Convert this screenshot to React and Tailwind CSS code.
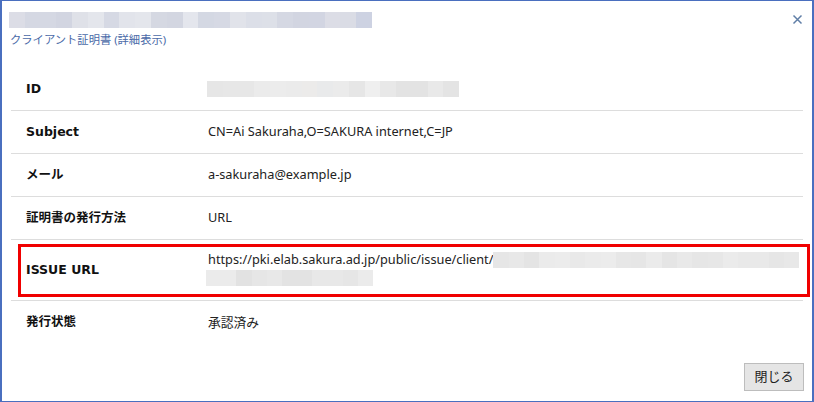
import React from "react";

const titleColors = ["#dcdde6","#d5d8e3","#d5d8e3","#d2d5e1","#dfe1e8","#e4e6ec","#d6d9e4","#e2e4eb","#e4e6ec","#d5d8e2","#d3d6e1","#e4e6ed","#d4d8e3","#d6d9e4","#e1e3ea","#dcdfe8","#dde0e8","#d5d8e3","#d2d5e1","#d2d5e2","#dcdde6","#dadce5","#cdd2e2"];
const idColors = ["#e6e6e6","#e7e7e7","#e7e7e7","#ebebeb","#ececec","#ebebeb","#ecebea","#e9eaeb","#ebebeb","#e6e6e6","#efefef","#e8e8e8","#e3e3e3","#e3e3e3","#e9e9e9","#e4e4e4"];
const url1Colors = ["#e6e6e6","#e8e8e8","#e4e4e4","#ebebeb","#ececec","#e9e9e9","#ebebeb","#ececec","#e7e7e7","#e6e6e6","#ebebeb","#e5e5e5","#e9e9e9","#e6e6e6","#e7e7e7","#ebebeb","#e9e9e9","#e9e9e9","#e6e6e6","#e8e8e8"];
const url2Colors = ["#ebebeb","#ebebeb","#e2e2e2","#e6e6e6","#e8e8e8","#e3e3e3","#e3e3e3","#e8e8e8","#e8e8e8","#e6e6e6","#ebebeb"];

const labelFont = { fontFamily: '"DejaVu Sans", "Noto Sans CJK JP", sans-serif' };

function Blur({ colors, w, h = 16, className = "" }) {
  const bw = w / colors.length;
  return (
    <div className={"flex shrink-0 " + className} style={{ width: w, height: h }}>
      {colors.map((c, i) => (
        <div key={i} style={{ width: bw, height: h, background: c }} />
      ))}
    </div>
  );
}

function Row({ label, children, last }) {
  return (
    <div className={"flex items-center h-[43px] " + (last ? "" : "border-b border-[#dddddd]")}>
      <div className="w-[197px] pl-[15px] font-bold text-[12.5px] text-[#111]" style={labelFont}>{label}</div>
      <div className="flex-1 text-[12.75px] text-[#222]">{children}</div>
    </div>
  );
}

export default function App() {
  return (
    <div
      className="w-[814px] h-[402px] bg-white border-l-2 border-r-2 border-t border-b border-[#4a6fbf] relative overflow-hidden"
      style={{ fontFamily: '"Noto Sans", "Noto Sans CJK JP", sans-serif' }}
    >
      <div className="pl-[7px] pt-[11px]">
        <Blur colors={titleColors} w={363} h={16} />
        <div className="mt-[4px] pl-[1px] text-[11.3px] leading-[16px] text-[#4a6aa8]">
          クライアント証明書 (詳細表示)
        </div>
      </div>
      <button className="absolute left-[788px] top-[11px] w-[14px] h-[14px] flex items-center justify-center">
        <svg width="11" height="11" viewBox="0 0 11 11">
          <path d="M1.5 1.5 L9.5 9.5 M9.5 1.5 L1.5 9.5" stroke="#5f7ea6" strokeWidth="1.5" />
        </svg>
      </button>

      <div className="ml-[9px] mr-[9px] mt-[20px]">
        <Row label="ID">
          <Blur colors={idColors} w={252} h={16} className="-ml-[1px]" />
        </Row>
        <Row label="Subject">CN=Ai Sakuraha,O=SAKURA internet,C=JP</Row>
        <Row label="メール">a-sakuraha@example.jp</Row>
        <Row label="証明書の発行方法">URL</Row>
        <div className="h-[61px] border-b border-[#dddddd] pt-[4px] pb-[3px] pl-[7px]">
          <div className="h-[53px] w-[792px] border-[3px] border-[#f00000] flex items-center">
            <div className="w-[187px] pl-[5px] font-bold text-[12.5px] text-[#111]" style={labelFont}>ISSUE URL</div>
            <div className="flex-1 flex flex-col gap-[2px] -mt-[3px]">
              <div className="flex items-center text-[12.75px] text-[#222] h-[16px]">
                <span>https://pki.elab.sakura.ad.jp/public/issue/client/</span>
                <Blur colors={url1Colors} w={306} h={16} />
              </div>
              <Blur colors={url2Colors} w={167} h={16} className="-ml-[2px]" />
            </div>
          </div>
        </div>
        <Row label="発行状態" last>承認済み</Row>
      </div>

      <div className="absolute left-[742px] top-[362px]">
        <button className="w-[60px] h-[28px] bg-[#e5e5e5] border border-[#bdbdbd] text-[13px] text-[#222] flex items-center justify-center">
          閉じる
        </button>
      </div>
    </div>
  );
}
